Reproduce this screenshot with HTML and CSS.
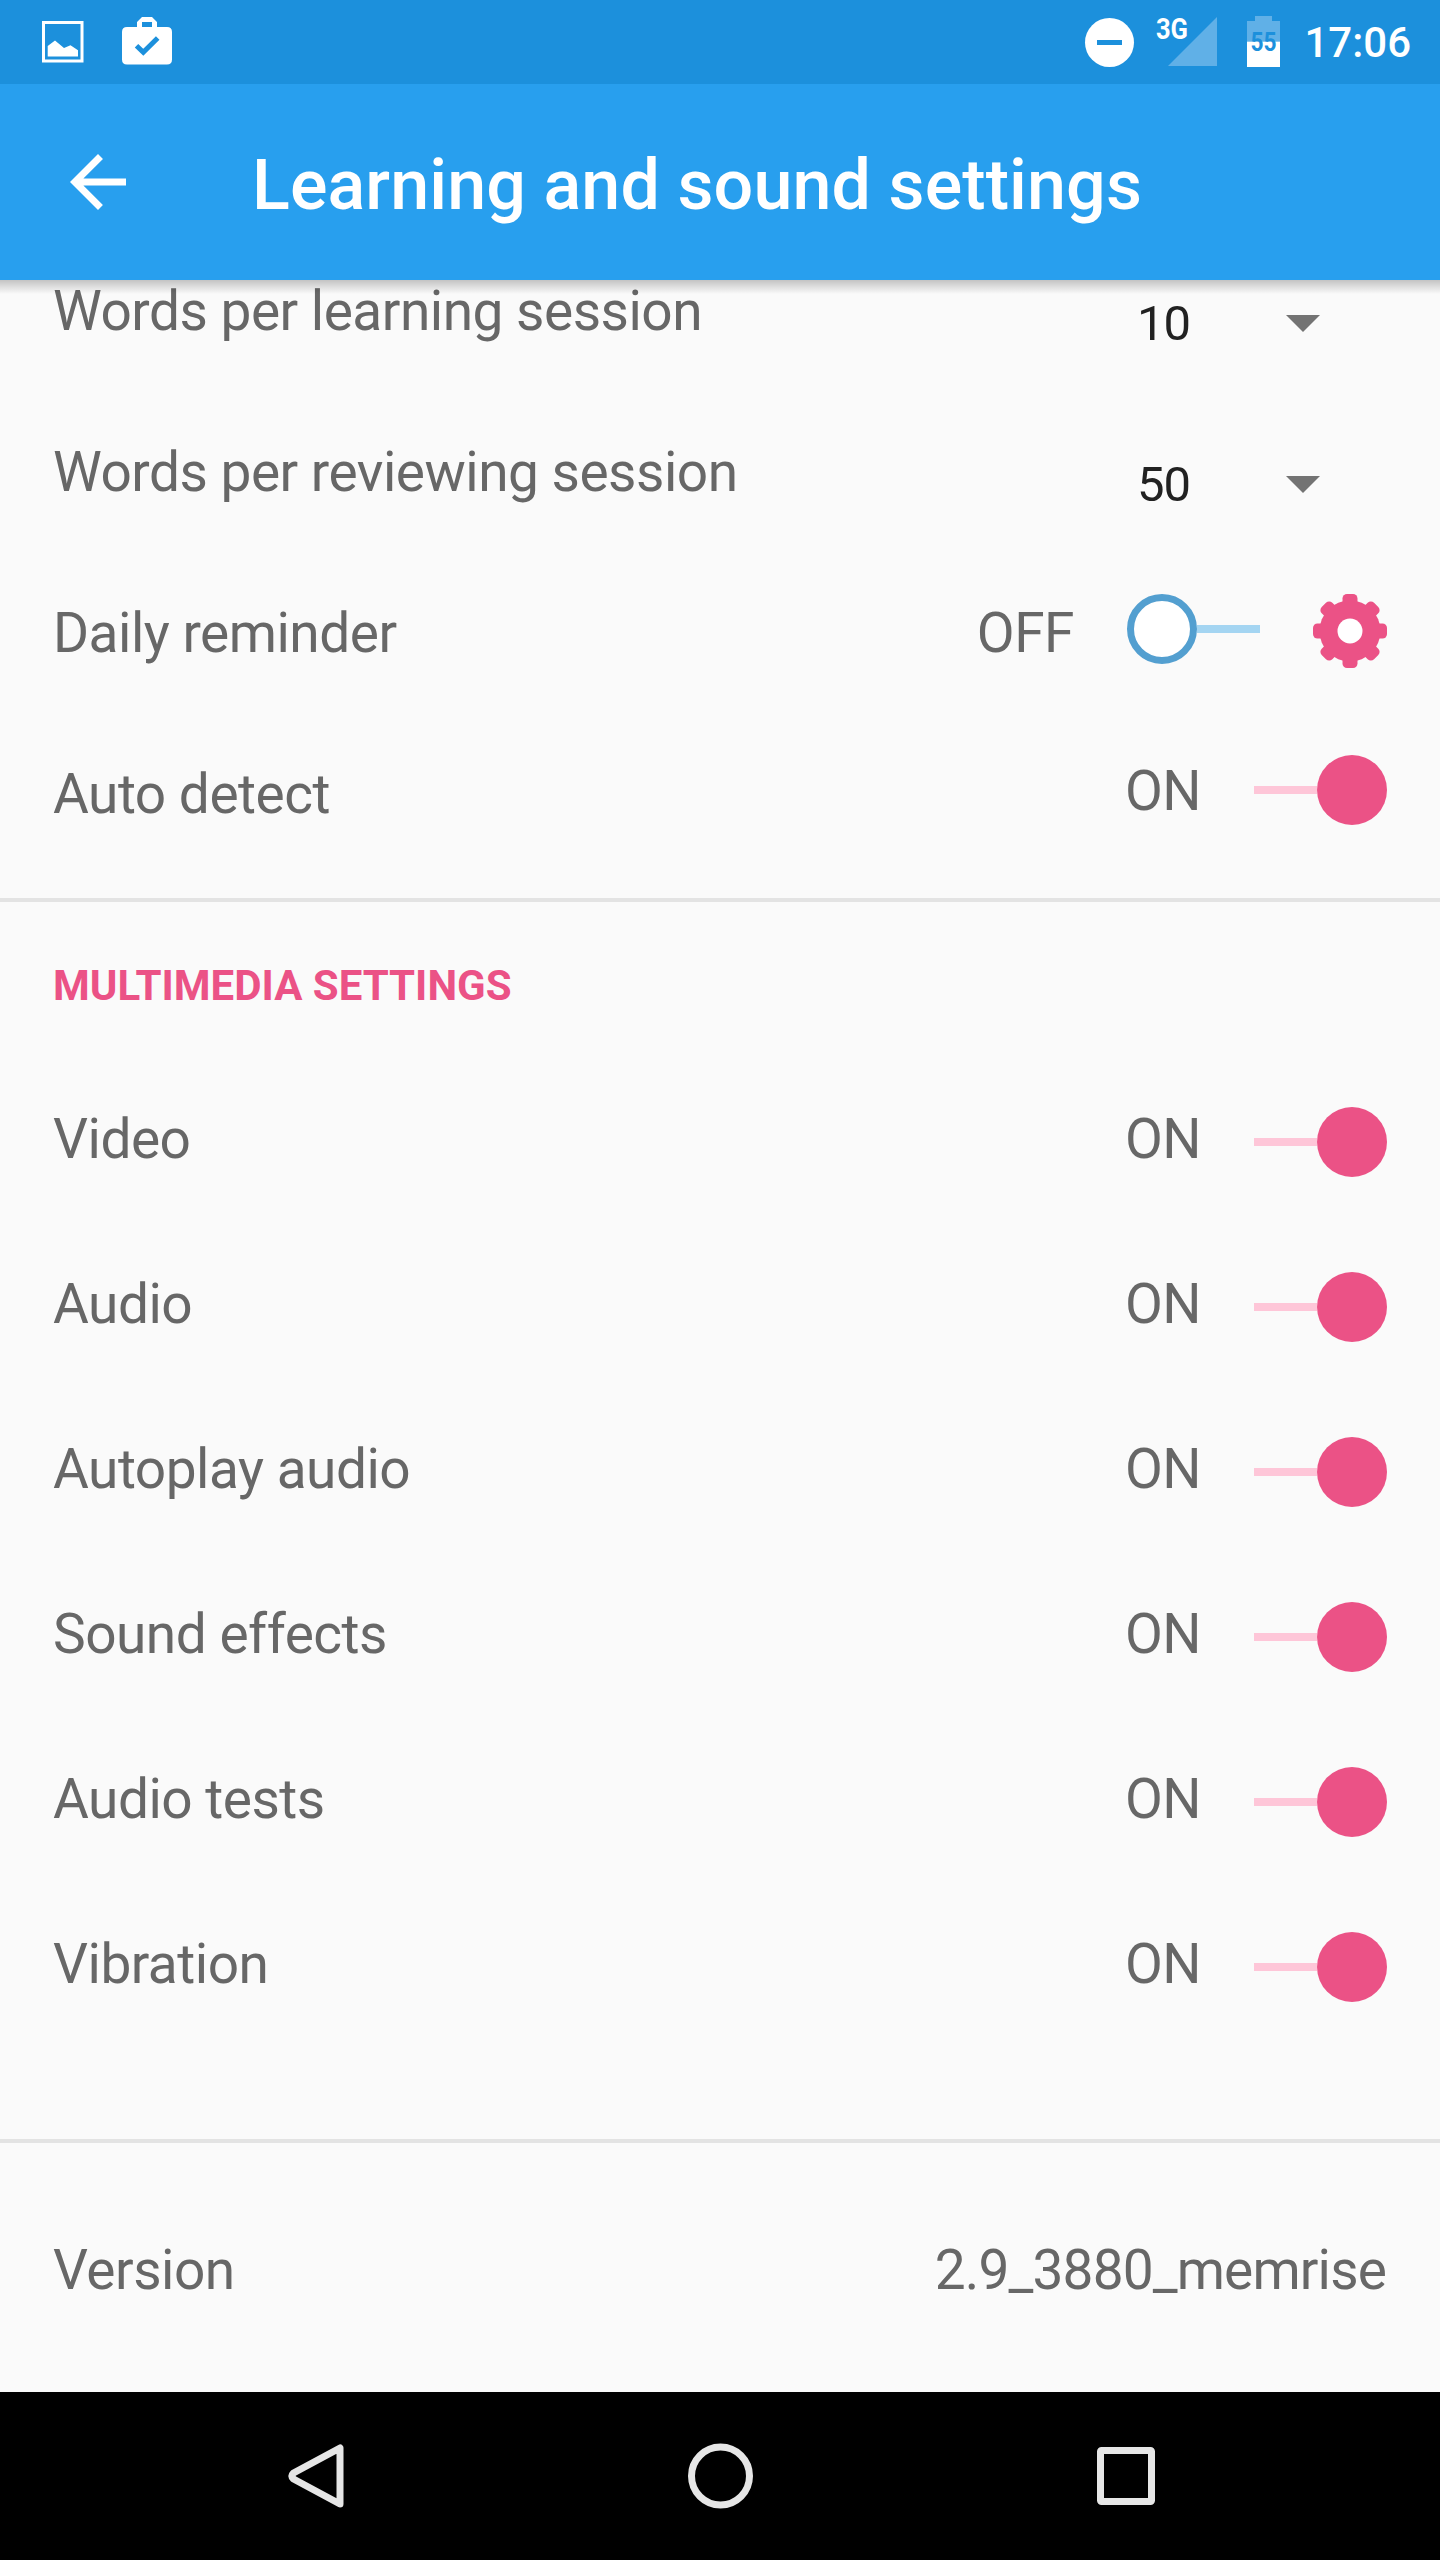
FILE: index.html
```
<!DOCTYPE html>
<html lang="en">
<head>
    <meta charset="UTF-8">
    <meta name="viewport" content="width=device-width, initial-scale=1.0">
    <title>Learning and sound settings</title>
    <link rel="stylesheet" href="styles.css">
</head>
<body>
    <div class="status_bar">
        <div class="status_left">
            <svg class="icon_picture" width="42" height="42" viewBox="0 0 42 42">
                <rect x="1.5" y="1.5" width="38.5" height="38.5" fill="none" stroke="#fff" stroke-width="3" />
                <path d="M5.7 25 13 19.5 22 27 28.5 24.3 36 29.3V35.5H5.7z" fill="#fff" />
            </svg>
            <svg class="icon_bag" width="50" height="48" viewBox="0 0 50 48">
                <path d="M15 10V5L20 0H30L35 5V10H45Q50 10 50 15V42.500Q50 47.500 45 47.500H5Q0 47.500 0 42.500V15Q0 10 5 10zM20 10H30V5H20z" fill="#fff" fill-rule="evenodd" />
                <path d="M14.500 28.700 21.300 35.300 35.700 20.900" fill="none" stroke="#1c90dc" stroke-width="5" />
            </svg>
        </div>
        <div class="status_right">
            <svg width="49" height="49" viewBox="0 0 49 49">
                <circle cx="24.500" cy="24.500" r="24.500" fill="#fff" />
                <rect x="12" y="22" width="25" height="5" fill="#1c90dc" />
            </svg>
            <svg class="icon_signal" width="61" height="49" viewBox="0 0 61 49">
                <path d="M12 49H61V0z" fill="#60b0e7" />
                <text class="signal_text" x="0" y="22" textLength="32" lengthAdjust="spacingAndGlyphs">3G</text>
            </svg>
            <svg class="icon_battery" width="33" height="51" viewBox="0 0 33 51">
                <path d="M8 0H25V5H33V26H0V5H8z" fill="#60b0e7" />
                <rect y="25.700" width="33" height="25.300" fill="#fff" />
                <text class="battery_text" x="3.500" y="35" textLength="26" lengthAdjust="spacingAndGlyphs">55</text>
            </svg>
            <p class="clock">17:06</p>
        </div>
    </div>

    <div class="header">
        <svg width="84" height="84" viewBox="0 0 24 24">
            <path d="M20 11H7.830l5.590-5.590L12 4l-8 8 8 8 1.410-1.410L7.830 13H20v-2z" fill="#fff" />
        </svg>
        <h1>Learning and sound settings</h1>
    </div>

    <div class="learning">
        <div class="row">
            <p>Words per learning session</p>
            <div class="spinner"><span>10</span><i class="arrow"></i></div>
        </div>
        <div class="row">
            <p>Words per reviewing session</p>
            <div class="spinner"><span>50</span><i class="arrow"></i></div>
        </div>
        <div class="row">
            <p>Daily reminder</p>
            <div class="control">
                <span>OFF</span>
                <div class="switch off"><i class="knob"></i><i class="track"></i></div>
                <svg class="gear" width="74" height="74" viewBox="-37 -37 74 74" fill="#eb5286">
                    <circle r="30.500" />
                    <g id="teeth">
                        <rect x="-7.500" y="-37" width="15" height="74" rx="4.500" />
                        <rect x="-37" y="-7.500" width="74" height="15" rx="4.500" />
                    </g>
                    <use href="#teeth" transform="rotate(45)" />
                    <circle r="12.500" fill="#fff" />
                </svg>
            </div>
        </div>
        <div class="row auto_detect">
            <p>Auto detect</p>
            <div class="control">
                <span>ON</span>
                <div class="switch on"><i class="track"></i><i class="knob"></i></div>
            </div>
        </div>
    </div>

    <div class="multimedia">
        <h2>MULTIMEDIA SETTINGS</h2>
        <div class="row">
            <p>Video</p>
            <div class="control">
                <span>ON</span>
                <div class="switch on"><i class="track"></i><i class="knob"></i></div>
            </div>
        </div>
        <div class="row">
            <p>Audio</p>
            <div class="control">
                <span>ON</span>
                <div class="switch on"><i class="track"></i><i class="knob"></i></div>
            </div>
        </div>
        <div class="row">
            <p>Autoplay audio</p>
            <div class="control">
                <span>ON</span>
                <div class="switch on"><i class="track"></i><i class="knob"></i></div>
            </div>
        </div>
        <div class="row">
            <p>Sound effects</p>
            <div class="control">
                <span>ON</span>
                <div class="switch on"><i class="track"></i><i class="knob"></i></div>
            </div>
        </div>
        <div class="row">
            <p>Audio tests</p>
            <div class="control">
                <span>ON</span>
                <div class="switch on"><i class="track"></i><i class="knob"></i></div>
            </div>
        </div>
        <div class="row">
            <p>Vibration</p>
            <div class="control">
                <span>ON</span>
                <div class="switch on"><i class="track"></i><i class="knob"></i></div>
            </div>
        </div>
    </div>

    <div class="row version">
        <p>Version</p>
        <p class="version_number">2.9_3880_memrise</p>
    </div>

    <div class="nav_bar">
        <svg width="56" height="66" viewBox="0 0 56 66">
            <path d="M52 5V61L5.500 36Q2.500 33 5.500 30z" fill="none" stroke="#e6e6e6" stroke-width="7" stroke-linejoin="round" />
        </svg>
        <svg width="66" height="66" viewBox="0 0 66 66">
            <circle cx="32.500" cy="33" r="29" fill="none" stroke="#e6e6e6" stroke-width="7" />
        </svg>
        <svg width="58" height="58" viewBox="0 0 58 58">
            <rect x="3.500" y="3.500" width="51" height="51" rx="1" fill="none" stroke="#e6e6e6" stroke-width="7" stroke-linejoin="round" />
        </svg>
    </div>
</body>
</html>
```
FILE: styles.css
```
* {
    margin: 0;
    padding: 0;
    box-sizing: border-box;
}

body {
    width: 1440px;
    height: 2560px;
    overflow: hidden;
    background-color: #fafafa;
    color: #676767;
    font-family: Roboto, sans-serif;
    font-size: 55px;
    line-height: 66px;
    letter-spacing: -0.5px;
    display: flex;
    flex-direction: column;
}

svg {
    display: block;
    flex-shrink: 0;
    overflow: visible;
    letter-spacing: 0;
}

.status_bar {
    position: relative;
    z-index: 2;
    height: 84px;
    background-color: #1c90dc;
    display: flex;
    justify-content: space-between;
    padding: 0 29px 0 42px;
    flex-shrink: 0;
}

.status_left,
.status_right {
    display: flex;
    align-items: flex-start;
}

.status_left {
    gap: 38px;
}

.icon_picture {
    margin-top: 21px;
}

.icon_bag {
    margin-top: 17px;
}

.status_right {
    padding-top: 18px;
}

.icon_signal {
    margin: -1px 30px 0 22px;
}

.icon_battery {
    margin: -2px 24px 0 0;
}

.signal_text {
    font-size: 30px;
    font-weight: bold;
    fill: #fff;
}

.battery_text {
    font-size: 25px;
    font-weight: bold;
    fill: #1c90dc;
}

.clock {
    color: #fff;
    font-size: 42px;
    font-weight: 500;
    line-height: 50px;
    letter-spacing: 0;
}

.header {
    position: relative;
    z-index: 1;
    height: 196px;
    background-color: #289fee;
    display: flex;
    align-items: center;
    gap: 112px;
    padding-left: 56px;
    flex-shrink: 0;
}

.header::after {
    content: "";
    position: absolute;
    top: 100%;
    left: 0;
    width: 100%;
    height: 14px;
    background: linear-gradient(rgba(0, 0, 0, 0.22), rgba(0, 0, 0, 0));
}

h1 {
    color: #fff;
    font-size: 70px;
    font-weight: 500;
    line-height: 82px;
    letter-spacing: 0.1px;
    padding-top: 6px;
}

.row {
    height: 161px;
    padding: 0 53px;
    display: flex;
    justify-content: space-between;
    align-items: center;
    flex-shrink: 0;
}

.row p,
.control span {
    padding-bottom: 1px;
}

.learning {
    margin-top: -49px;
    padding-bottom: 23px;
    border-bottom: 4px solid #e3e3e3;
}

.spinner {
    width: 250px;
    padding-right: 67px;
    display: flex;
    justify-content: space-between;
    align-items: center;
    color: #212121;
    font-size: 49px;
    line-height: 58px;
    letter-spacing: -1px;
    margin-top: 25px;
}

.arrow {
    border: 17.5px solid transparent;
    border-top-color: #737373;
    border-bottom: none;
    margin-top: -1px;
}

.control {
    display: flex;
    align-items: center;
    gap: 53px;
}

.switch {
    width: 133px;
    display: flex;
    align-items: center;
    margin-top: -9px;
}

.knob {
    width: 70px;
    height: 70px;
    border-radius: 50%;
}

.track {
    width: 63px;
    height: 8px;
}

.on .knob {
    background-color: #eb5286;
}

.on .track {
    background-color: #fec6d8;
}

.off .knob {
    background-color: #fff;
    border: 7px solid #539fd0;
}

.off .track {
    background-color: #a4d5f2;
}

.gear {
    margin-top: -5px;
}

.auto_detect span {
    margin-top: -6px;
}

.multimedia {
    padding: 59px 0 92px;
    border-bottom: 4px solid #e3e3e3;
}

h2 {
    color: #eb5286;
    font-size: 42px;
    font-weight: bold;
    line-height: 49px;
    letter-spacing: 0;
    padding-left: 53px;
    margin-bottom: 47px;
}

.multimedia .row {
    height: 165px;
}

.multimedia .switch {
    margin-top: 5px;
}

.version {
    height: 249px;
    padding-top: 6px;
}

.version .version_number {
    letter-spacing: -0.85px;
    padding-right: 1px;
}

.nav_bar {
    height: 168px;
    background-color: #000;
    display: flex;
    justify-content: space-between;
    align-items: center;
    padding: 0 285px 0 288px;
    flex-shrink: 0;
}
```
